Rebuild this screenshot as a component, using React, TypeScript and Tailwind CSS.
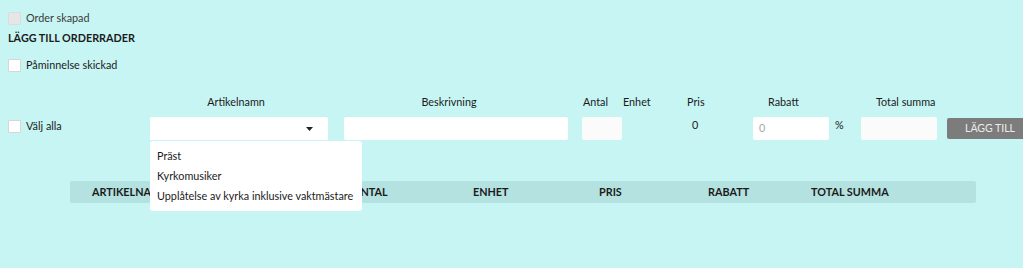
import React from 'react'

function Box({ disabled }: { disabled?: boolean }) {
  return (
    <span
      className={
        'inline-block h-[13px] w-[13px] shrink-0 rounded-[1px] border ' +
        (disabled ? 'border-[#dcdcdc] bg-[#e6e6e6]' : 'border-[#d6d6d6] bg-white')
      }
    />
  )
}

export default function App() {
  return (
    <div
      className="h-[268px] w-full overflow-hidden bg-[#c7f5f3] text-[10.8px] text-[#1b1b1b]"
      style={{ fontFamily: 'Lato, "Open Sans", sans-serif' }}
    >
      <div className="pl-2 pt-[11px]">
        <label className="flex h-[14px] items-center gap-[5px] text-[#3a3a3a]">
          <Box disabled />
          <span>Order skapad</span>
        </label>
        <div className="mt-[4px] font-bold leading-[18px]">LÄGG TILL ORDERRADER</div>
        <label className="mt-[11px] flex h-[14px] items-center gap-[5px]">
          <Box />
          <span>Påminnelse skickad</span>
        </label>
      </div>

      {/* column headers */}
      <div className="mt-[22px] flex h-[16px] items-center pl-2 leading-none">
        <div className="w-[142px] shrink-0" />
        <div className="w-[178px] shrink-0 pr-[6px] text-center">Artikelnamn</div>
        <div className="ml-[16px] w-[224px] shrink-0 pr-[14px] text-center">Beskrivning</div>
        <div className="ml-[14px] w-[40px] shrink-0 pl-[1px]">Antal</div>
        <div className="w-[58px] shrink-0 pl-[1px]">Enhet</div>
        <div className="w-[73px] shrink-0 pl-[7px]">Pris</div>
        <div className="w-[76px] shrink-0 pl-[15px]">Rabatt</div>
        <div className="w-[32px] shrink-0" />
        <div className="w-[76px] shrink-0 pl-[15px] whitespace-nowrap">Total summa</div>
      </div>

      {/* input row */}
      <div className="mt-[7px] flex h-[23px] items-start pl-2">
        <label className="flex h-[18px] w-[142px] shrink-0 items-center gap-[5px]">
          <Box />
          <span>Välj alla</span>
        </label>
        <div className="relative w-[178px] shrink-0">
          <div className="flex h-[23px] items-center justify-end rounded-t-[2px] bg-white pr-[15px]">
            <svg width="7" height="4" viewBox="0 0 7 4">
              <path d="M0 0h7L3.5 4z" fill="#222" />
            </svg>
          </div>
          <ul className="absolute left-0 top-[24px] z-10 w-[212px] rounded-[3px] bg-white py-[5px] pl-[7px] leading-[20px] whitespace-nowrap">
            <li>Präst</li>
            <li>Kyrkomusiker</li>
            <li>Upplåtelse av kyrka inklusive vaktmästare</li>
          </ul>
        </div>
        <div className="ml-[16px] h-[23px] w-[224px] shrink-0 rounded-[2px] bg-white" />
        <div className="ml-[14px] h-[23px] w-[40px] shrink-0 rounded-[2px] bg-[#fbfbfb]" />
        <div className="w-[58px] shrink-0" />
        <div className="w-[73px] shrink-0 pl-[12px]">0</div>
        <div className="flex h-[23px] w-[76px] shrink-0 items-center rounded-[2px] bg-white pl-[6px] text-[#a8a8a8]">0</div>
        <div className="w-[32px] shrink-0 pl-[6px]">%</div>
        <div className="h-[23px] w-[76px] shrink-0 rounded-[2px] bg-[#fbfbfb]" />
        <button className="ml-[10px] mt-[1px] flex h-[21px] w-[86px] shrink-0 items-center rounded-[2px] bg-[#7c7c7c] pl-[18px] text-[10.5px] text-[#ececec]">
          LÄGG TILL
        </button>
      </div>

      {/* table header */}
      <div className="mx-[70px] mt-[41px] w-[906px] rounded-[2px] bg-[#b3e2e0]">
        <div className="flex h-[22px] items-center font-bold leading-none whitespace-nowrap">
          <div className="w-[283px] shrink-0 pl-[22px]">ARTIKELNAMN</div>
          <div className="w-[120px] shrink-0">ANTAL</div>
          <div className="w-[126px] shrink-0">ENHET</div>
          <div className="w-[109px] shrink-0">PRIS</div>
          <div className="w-[103px] shrink-0">RABATT</div>
          <div>TOTAL SUMMA</div>
        </div>
      </div>
    </div>
  )
}
